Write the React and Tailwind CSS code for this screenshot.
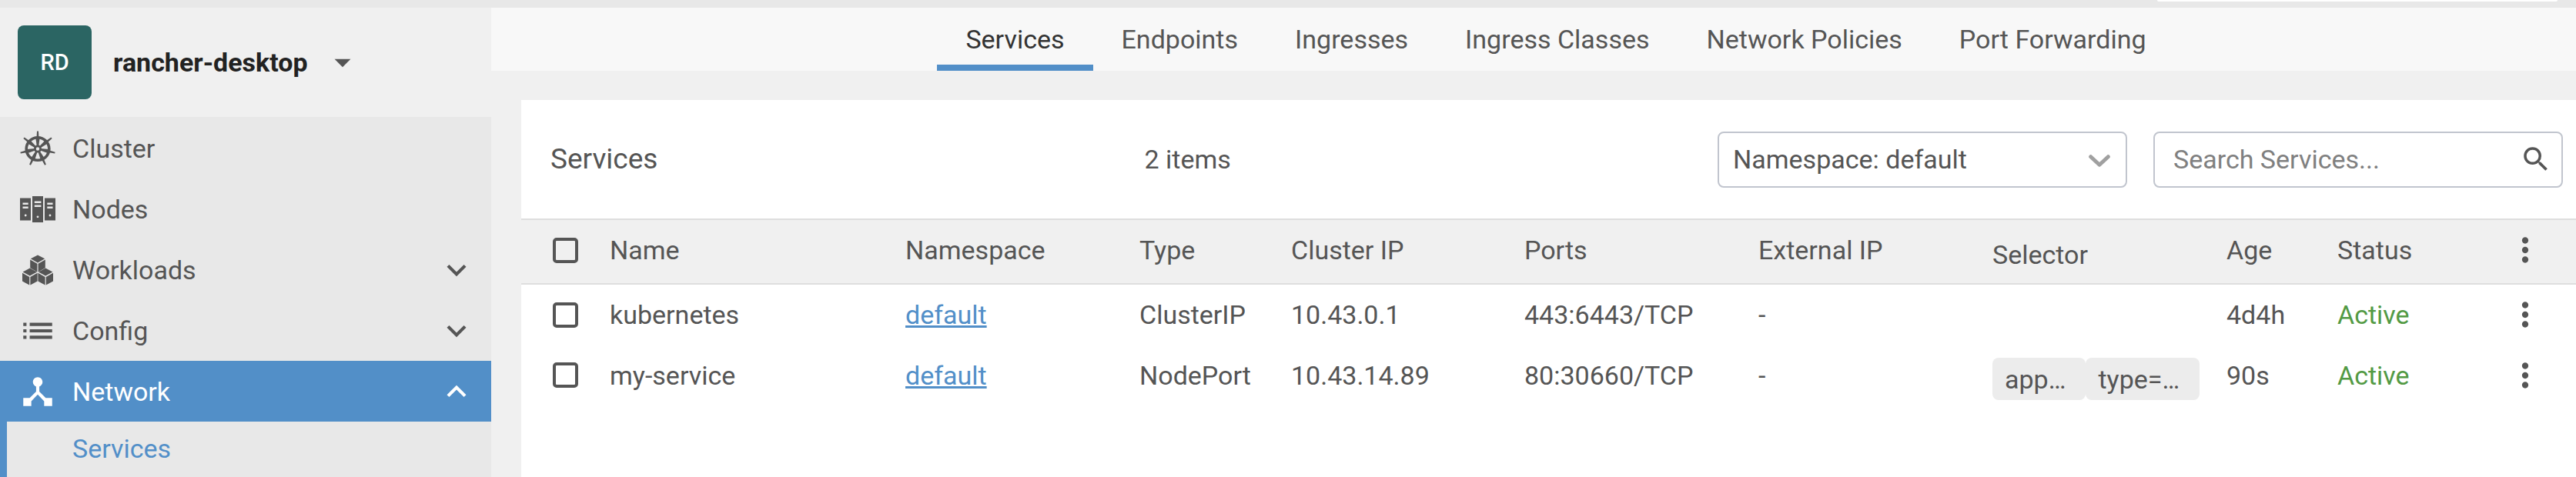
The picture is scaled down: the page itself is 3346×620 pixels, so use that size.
import React from "react";
import {
  MdArrowDropDown,
  MdDeviceHub,
  MdKeyboardArrowDown,
  MdKeyboardArrowUp,
  MdList,
  MdMoreVert,
  MdSearch,
} from "react-icons/md";

const SPOKES = [0, 1, 2, 3, 4, 5, 6].map((i) => (i * 360) / 7);

function ClusterIcon({ className }) {
  return (
    <svg viewBox="0 0 50 50" className={className} fill="currentColor" aria-hidden="true">
      <circle cx="25" cy="25.5" r="14.8" fill="none" stroke="currentColor" strokeWidth="3.6" />
      {SPOKES.map((angle) => (
        <g key={angle} transform={`rotate(${angle} 25 25.5)`}>
          <path d="M24 2.5h2l.4 7.5h-2.8z" />
          <path d="M22.3 11h5.4L26.2 22h-2.4z" />
        </g>
      ))}
      <circle cx="25" cy="25.5" r="3.6" fill="none" stroke="currentColor" strokeWidth="2.8" />
    </svg>
  );
}

function NodesIcon({ className }) {
  return (
    <svg viewBox="0 0 50 50" className={className} fill="currentColor" aria-hidden="true">
      <path
        fillRule="evenodd"
        d="M2 10.5h14v29H2zM5.5 16.5v2.4h7.2v-2.4zM5.5 21.5v2.4h7.2v-2.4zM9.2 31.6a1.3 1.3 0 1 0 0 2.8 1.3 1.3 0 0 0 0-2.8z"
      />
      <path
        fillRule="evenodd"
        d="M18 8h14v34H18zM20.8 14.5v2.4h8.6v-2.4zM20.8 19.5v2.4h8.6v-2.4zM25 33.4a1.3 1.3 0 1 0 0 2.8 1.3 1.3 0 0 0 0-2.8z"
      />
      <path
        fillRule="evenodd"
        d="M34 10.5h14v29H34zM37.3 16.5v2.4h7.2v-2.4zM37.3 21.5v2.4h7.2v-2.4zM41 31.6a1.3 1.3 0 1 0 0 2.8 1.3 1.3 0 0 0 0-2.8z"
      />
    </svg>
  );
}

function WorkloadsIcon({ className }) {
  const cubes = [
    [25, 5],
    [14.8, 22.2],
    [35.2, 22.2],
  ];
  return (
    <svg viewBox="0 0 50 50" className={className} fill="currentColor" aria-hidden="true">
      {cubes.map(([x, y]) => (
        <g key={x} transform={`translate(${x} ${y})`}>
          <path d="M0 0.4 9.2 5.3 0 10.4-9.2 5.3z" />
          <path d="M-9.8 6.6-.6 11.7V22.4L-9.8 17.3z" />
          <path d="M9.8 6.6.6 11.7V22.4L9.8 17.3z" />
        </g>
      ))}
    </svg>
  );
}

const NAV = [
  { label: "Cluster", Icon: ClusterIcon },
  { label: "Nodes", Icon: NodesIcon },
  { label: "Workloads", Icon: WorkloadsIcon, group: true },
  { label: "Config", Icon: MdList, group: true },
  { label: "Network", Icon: MdDeviceHub, group: true, open: true, children: ["Services"] },
];

const TABS = [
  "Services",
  "Endpoints",
  "Ingresses",
  "Ingress Classes",
  "Network Policies",
  "Port Forwarding",
];

const ROWS = [
  {
    name: "kubernetes",
    namespace: "default",
    type: "ClusterIP",
    clusterIp: "10.43.0.1",
    ports: "443:6443/TCP",
    externalIp: "-",
    selector: [],
    age: "4d4h",
    status: "Active",
  },
  {
    name: "my-service",
    namespace: "default",
    type: "NodePort",
    clusterIp: "10.43.14.89",
    ports: "80:30660/TCP",
    externalIp: "-",
    selector: ["app…", "type=…"],
    age: "90s",
    status: "Active",
  },
];

function Sidebar() {
  return (
    <aside className="flex w-[638px] shrink-0 flex-col bg-[#e8e8e8]">
      <button type="button" className="flex h-[142px] items-center bg-[#f0f0f0] pl-[23px] text-left">
        <span className="flex size-24 items-center justify-center rounded-lg bg-[#2b6563] text-[29px] font-medium text-white">
          RD
        </span>
        <span className="ml-7 font-bold text-[#222222]">rancher-desktop</span>
        <MdArrowDropDown className="ml-5 size-[50px] text-[#555555]" />
      </button>
      <nav className="flex flex-1 flex-col pt-px">
        {NAV.map(({ label, Icon, group, open, children }) => (
          <React.Fragment key={label}>
            <a
              href={`#${label.toLowerCase()}`}
              className={
                open
                  ? "flex h-[79px] items-center bg-[#528fc8] pr-5 pl-6 text-white"
                  : "flex h-[79px] items-center pr-5 pl-6"
              }
            >
              <Icon className="size-[50px]" />
              <span className="ml-5 flex-1">{label}</span>
              {group &&
                (open ? (
                  <MdKeyboardArrowUp className="size-[50px]" />
                ) : (
                  <MdKeyboardArrowDown className="size-[50px]" />
                ))}
            </a>
            {children && (
              <ul className="flex-1 border-l-[9px] border-[#528fc8]">
                {children.map((child) => (
                  <li key={child}>
                    <a
                      href="#services"
                      className="flex h-[70px] items-center pl-[85px] text-[#528fc8]"
                    >
                      {child}
                    </a>
                  </li>
                ))}
              </ul>
            )}
          </React.Fragment>
        ))}
      </nav>
    </aside>
  );
}

function Tabs() {
  return (
    <nav className="flex h-[82px] justify-center bg-[#f8f8f8] pl-[58px]">
      {TABS.map((tab, i) => (
        <a
          key={tab}
          href="#tab"
          className={
            i === 0
              ? "flex items-center border-y-8 border-t-transparent border-b-[#528fc8] px-[37px] whitespace-nowrap text-[#333333]"
              : "flex items-center border-y-8 border-transparent px-[37px] whitespace-nowrap"
          }
        >
          {tab}
        </a>
      ))}
    </nav>
  );
}

function PanelHeader() {
  return (
    <div className="flex h-[154px] items-center pr-[17px] pl-[38px]">
      <h1 className="text-[37px]">Services</h1>
      <p className="flex-1 text-center">2 items</p>
      <div className="relative w-[532px]">
        <select
          aria-label="Namespace"
          className="h-[73px] w-full appearance-none rounded-lg border-2 border-[#c1c5ce] bg-white pr-20 pl-[18px]"
        >
          <option>Namespace: default</option>
        </select>
        <svg
          viewBox="0 0 28 16"
          className="pointer-events-none absolute top-[30px] right-[22px] h-4 w-7"
          fill="none"
          stroke="#a0a0a0"
          strokeWidth="5"
          strokeLinecap="round"
          strokeLinejoin="round"
          aria-hidden="true"
        >
          <path d="M2.7 2.7 14 13.3 25.3 2.7" />
        </svg>
      </div>
      <label className="ml-[34px] flex h-[73px] w-[532px] items-center rounded-lg border-2 border-[#c1c5ce] pr-3 pl-6">
        <input
          type="text"
          aria-label="Search Services"
          placeholder="Search Services..."
          className="min-w-0 flex-1 bg-transparent outline-none placeholder:text-[#808080]"
        />
        <MdSearch className="size-[42px]" />
      </label>
    </div>
  );
}

function Check({ label }) {
  return (
    <input
      type="checkbox"
      aria-label={label}
      className="ml-[41px] block size-[33px] appearance-none rounded-[5px] border-4 border-[#555555]"
    />
  );
}

function MenuButton({ label }) {
  return (
    <button type="button" aria-label={label} className="mx-auto block">
      <MdMoreVert className="size-[50px]" />
    </button>
  );
}

function ServicesTable() {
  return (
    <table className="w-full table-fixed text-left whitespace-nowrap">
      <colgroup>
        <col className="w-[115px]" />
        <col />
        <col className="w-[304px]" />
        <col className="w-[197px]" />
        <col className="w-[303px]" />
        <col className="w-[304px]" />
        <col className="w-[304px]" />
        <col className="w-[304px]" />
        <col className="w-[144px]" />
        <col className="w-[178px]" />
        <col className="w-[132px]" />
      </colgroup>
      <thead>
        <tr className="h-[84px] border-y-2 border-[#dedede] bg-[#f0f0f0]">
          <th className="pb-1"><Check label="Select all" /></th>
          <th className="pb-1 font-normal">Name</th>
          <th className="pb-1 font-normal">Namespace</th>
          <th className="pb-1 font-normal">Type</th>
          <th className="pb-1 font-normal">Cluster IP</th>
          <th className="pb-1 font-normal">Ports</th>
          <th className="pb-1 font-normal">External IP</th>
          <th className="pt-2 font-normal">Selector</th>
          <th className="pb-1 font-normal">Age</th>
          <th className="pb-1 font-normal">Status</th>
          <th className="pb-1"><MenuButton label="Columns" /></th>
        </tr>
      </thead>
      <tbody>
        {ROWS.map((row) => (
          <tr key={row.name} className="h-[79px]">
            <td><Check label={`Select ${row.name}`} /></td>
            <td>{row.name}</td>
            <td>
              <a href="#namespace" className="text-[#528fc8] underline">{row.namespace}</a>
            </td>
            <td>{row.type}</td>
            <td>{row.clusterIp}</td>
            <td>{row.ports}</td>
            <td>{row.externalIp}</td>
            <td>
              <div className="flex pt-2.5">
                {row.selector.map((s) => (
                  <span
                    key={s}
                    className="flex h-[55px] items-center rounded-lg bg-[#ececec] pr-[26px] pl-4"
                  >
                    {s}
                  </span>
                ))}
              </div>
            </td>
            <td>{row.age}</td>
            <td className="text-[#539a44]">{row.status}</td>
            <td><MenuButton label={`${row.name} actions`} /></td>
          </tr>
        ))}
      </tbody>
    </table>
  );
}

export default function App() {
  return (
    <div className="flex min-h-screen flex-col bg-[#f0f0f0] font-['Roboto',sans-serif] text-[34px] leading-[40px] text-[#555555]">
      <div className="flex h-[10px] justify-end bg-[#e8e8e8] pr-6">
        <div className="h-[2px] w-[520px] rounded-b bg-white" />
      </div>
      <div className="flex flex-1">
        <Sidebar />
        <div className="flex min-w-0 flex-1 flex-col">
          <Tabs />
          <main className="mt-[38px] ml-[39px] flex-1 bg-white">
            <PanelHeader />
            <ServicesTable />
          </main>
        </div>
      </div>
    </div>
  );
}
